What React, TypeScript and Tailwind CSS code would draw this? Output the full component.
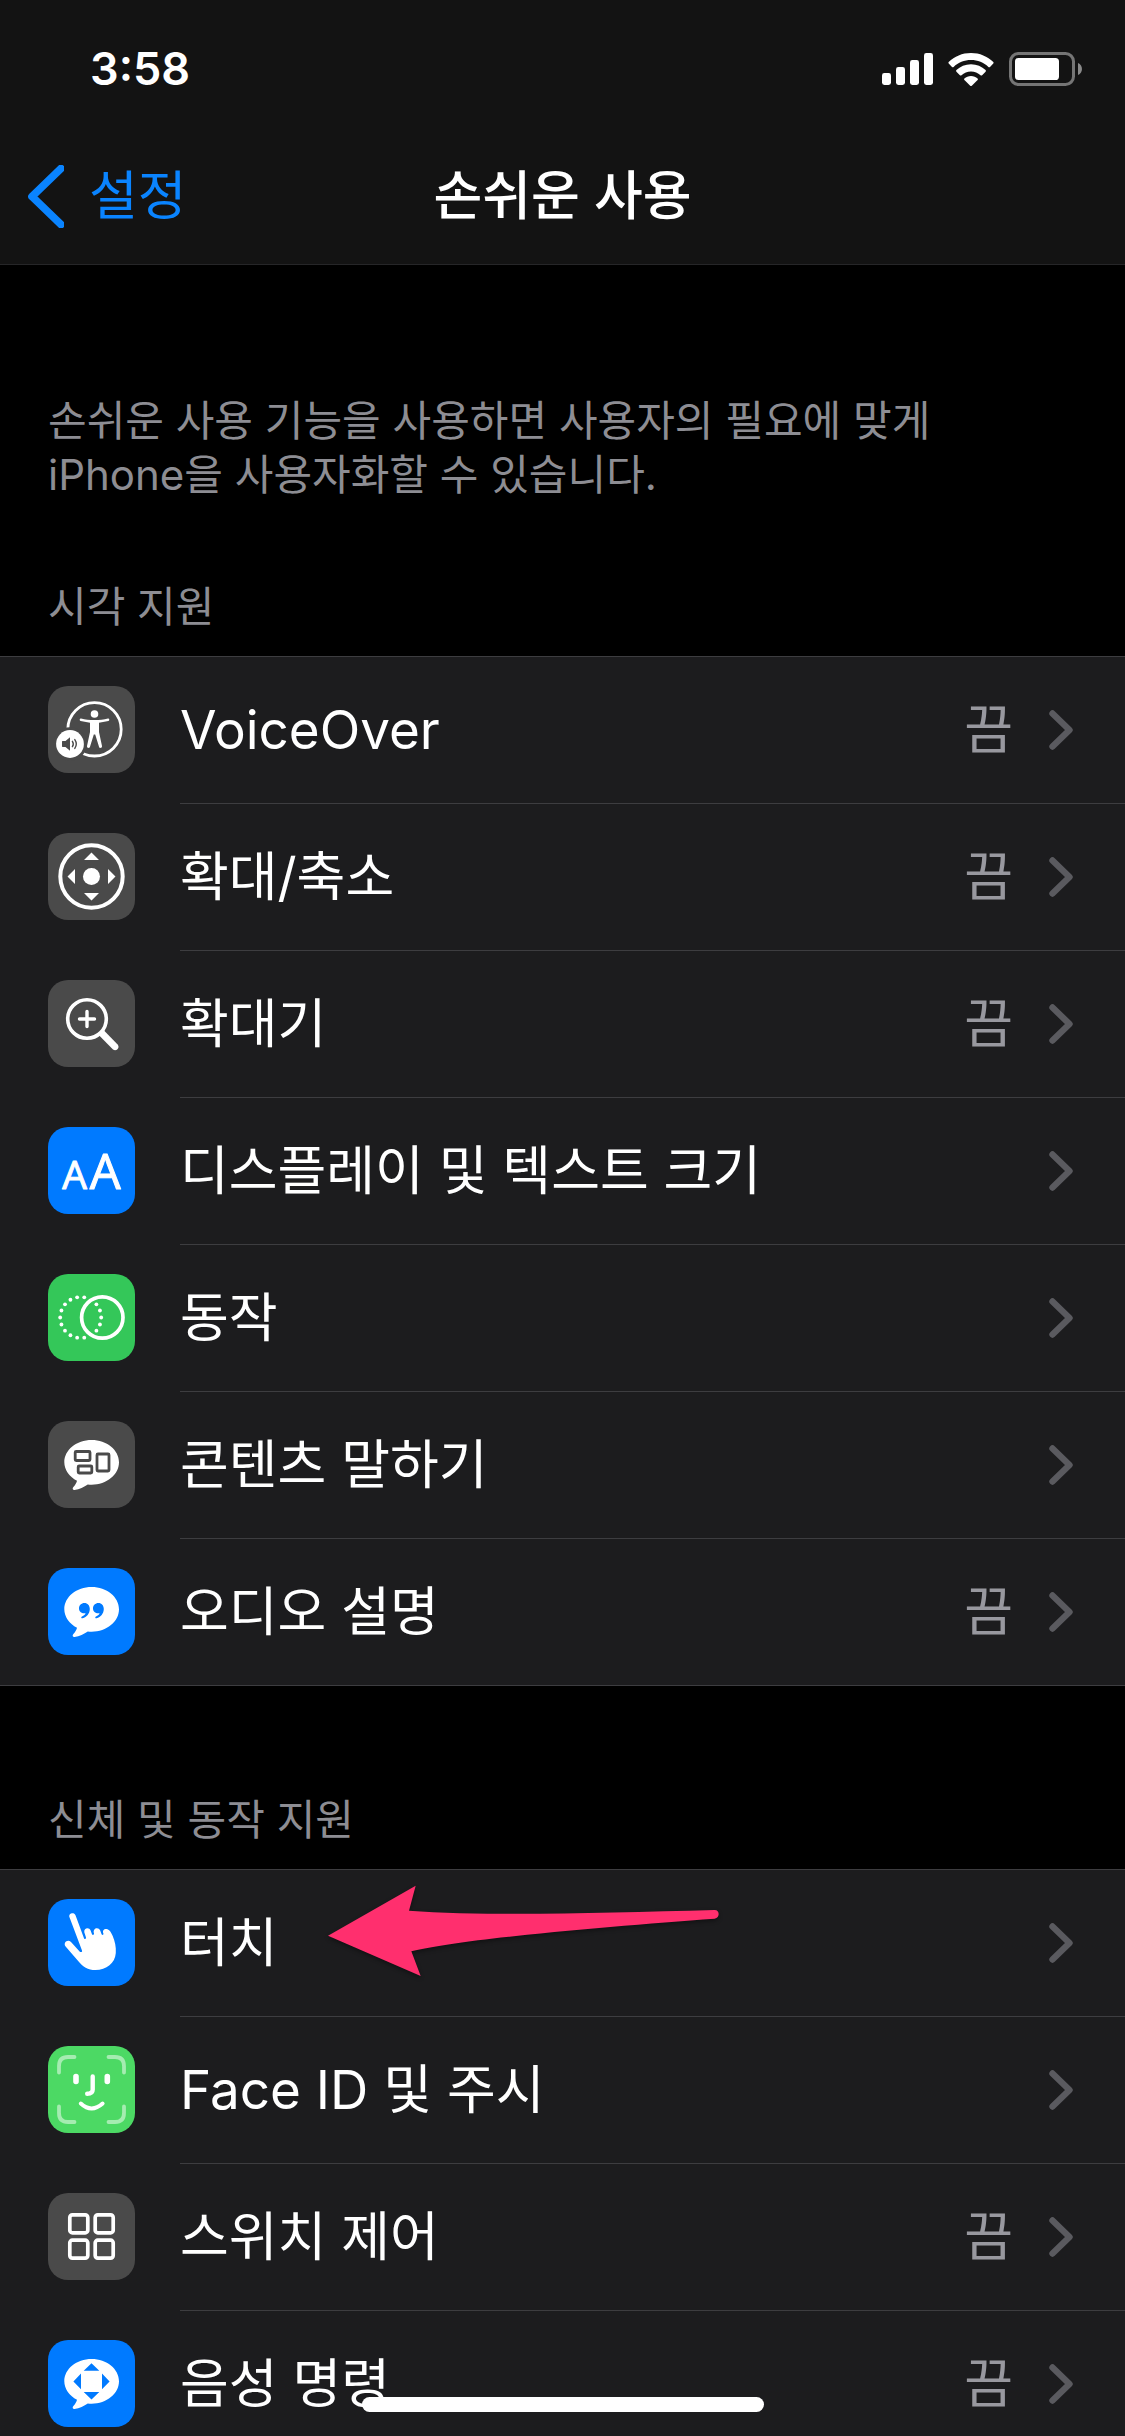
import type { ReactNode } from 'react';

interface SettingItem {
  id: string;
  label: string;
  iconBg: string;
  icon: ReactNode;
  value?: string;
  highlighted?: boolean;
}

interface SettingSection {
  id: string;
  title: string;
  items: SettingItem[];
}

const GRAY = 'bg-[#4a4a4a]';
const BLUE = 'bg-[#007aff]';

const BUBBLE_PATH =
  'M43.6 19C58.7 19 71 29 71 41.3S58.7 63.7 43.6 63.7C42.3 63.7 41 63.6 39.8 63.5C36 65.8 31.5 68.6 26.6 69C24.4 69.1 24.2 67.3 25.4 66C27.3 64 28.6 61.8 29 59.8C21.5 55.8 16.3 49.1 16.3 41.3C16.3 29 28.5 19 43.6 19Z';

const VoiceOverIcon = () => (
  <>
    <circle cx="46.5" cy="43.3" r="26.7" fill="none" stroke="#fff" strokeWidth="2.8" />
    <circle cx="46.5" cy="28" r="3.8" fill="#fff" />
    <path
      d="M33 32.6C41 34.6 52 34.6 60 32.6C61.5 32.4 61.8 34.6 60.4 35L51 36.8V46L54 60C54.3 62.3 51.6 62.6 51 60.8L47.2 48.4H45.8L42 60.8C41.4 62.6 38.7 62.3 39 60L42 46V36.8L32.6 35C31.2 34.6 31.5 32.4 33 32.6Z"
      fill="#fff"
    />
    <circle cx="22" cy="58" r="16.8" fill="#4a4a4a" />
    <circle cx="22" cy="58" r="13.9" fill="#fff" />
    <path d="M14.5 55H17.5L22 51.3V64.7L17.5 61H14.5Q14 61 14 60V56Q14 55 14.5 55Z" fill="#4a4a4a" />
    <path d="M24.4 55.3Q26.2 58 24.4 60.7M26.8 53.6Q29.8 58 26.8 62.4" fill="none" stroke="#4a4a4a" strokeWidth="1.4" strokeLinecap="round" />
  </>
);

const ZoomIcon = () => (
  <>
    <circle cx="43.5" cy="43.5" r="31.2" fill="none" stroke="#fff" strokeWidth="4" />
    <circle cx="43.5" cy="43.5" r="8.5" fill="#fff" />
    <path d="M43.5 19.5L51 27H36ZM43.5 67.5L51 60H36ZM19.5 43.5L27 36V51ZM67.5 43.5L60 36V51Z" fill="#fff" />
  </>
);

const MagnifierIcon = () => (
  <>
    <circle cx="39" cy="39" r="19.3" fill="none" stroke="#fff" strokeWidth="3.6" />
    <path d="M39 31.5V46.5M31.5 39H46.5" stroke="#fff" strokeWidth="3.4" strokeLinecap="round" />
    <path d="M56 50.6L69.6 64.4C72.3 67.6 68.4 71.9 65 69.4L51.2 55.4L51.6 53.4L54 51.2Z" fill="#fff" />
  </>
);

const TextSizeIcon = () => (
  <g
    fill="#fff"
    stroke="#fff"
    strokeWidth="1"
    strokeLinejoin="round"
    fontFamily="Open Sans, sans-serif"
    textAnchor="middle"
  >
    <text x="26.5" y="61.5" fontSize="39">A</text>
    <text x="57.3" y="61.5" fontSize="49">A</text>
  </g>
);

// the dots at 60° and 300° are hidden behind the solid ring
const motionDots = Array.from({ length: 18 }, (_, i) => i * 20).filter((a) => a !== 60 && a !== 300);

const MotionIcon = () => (
  <>
    <circle cx="54.3" cy="43.5" r="20.7" fill="none" stroke="#fff" strokeWidth="3.7" />
    {motionDots.map((angle) => (
      <circle
        key={angle}
        cx={32.7 + 20.5 * Math.cos((angle * Math.PI) / 180)}
        cy={43.5 + 20.5 * Math.sin((angle * Math.PI) / 180)}
        r="1.9"
        fill="#fff"
      />
    ))}
  </>
);

const SpokenContentIcon = () => (
  <>
    <path d={BUBBLE_PATH} fill="#fff" />
    <g fill="none" stroke="#4a4a4a" strokeWidth="2.8">
      <rect x="27.2" y="30.5" width="14.8" height="9" rx="1" />
      <rect x="30.2" y="45" width="13.6" height="7" rx="1" />
      <rect x="49" y="33" width="12" height="17" rx="1" />
    </g>
  </>
);

const AudioDescriptionIcon = () => (
  <>
    <path d={BUBBLE_PATH} fill="#fff" />
    <path
      d="M36.4 35C39.6 35 41.8 37.6 41.8 41C41.8 45.4 38.7 49.3 34.6 50.3C33.2 50.5 32.7 48.9 34 48.4C35.9 47.6 37.2 46.5 37.6 45.2C34 46 31 43.6 31 40.4C31 37.4 33.4 35 36.4 35ZM50.4 35C53.6 35 55.8 37.6 55.8 41C55.8 45.4 52.7 49.3 48.6 50.3C47.2 50.5 46.7 48.9 48 48.4C49.9 47.6 51.2 46.5 51.6 45.2C48 46 45 43.6 45 40.4C45 37.4 47.4 35 50.4 35Z"
      fill="#007aff"
    />
  </>
);

const TouchIcon = () => (
  <path
    d="M21.4 18C20.3 14.2 26.2 12.8 27.6 16.4L36 39.2C36.5 40.6 38.4 40.2 38 38.6L36.3 33.2C35.6 28.8 41.3 27.8 42.6 31.6L44 35.2C44.5 36.5 46.2 36 46 34.6C44.2 29.4 50.4 27.4 52.2 31.6L53.6 35.2C54.2 36.5 55.8 36 55.4 34.6C54 31 56.6 29.3 59.5 30.2C62 31 63.3 33.8 64.6 36.8C67 42.4 68.2 48.2 67.8 54C67.2 64 58.4 71 47.4 71C40 71 34.6 67.6 30.6 62.4L17.6 47.6C14.8 43.8 19.6 39.8 23 43L31.6 52.4C32.8 53.6 34.6 53 34 51.4Z"
    fill="#fff"
  />
);

const FaceIdIcon = () => (
  <g fill="none" strokeLinecap="round">
    <path
      d="M11 26.5V20Q11 11 20 11H26.5M60.5 11H67Q76 11 76 20V26.5M76 60.5V67Q76 76 67 76H60.5M26.5 76H20Q11 76 11 67V60.5"
      stroke="#a5ecb1"
      strokeWidth="3.8"
    />
    <path d="M28 30.5V35.5M59.3 30.5V35.5" stroke="#fff" strokeWidth="5.6" />
    <path d="M44.7 30.5V43.5Q44.7 47.8 39.2 47.8" stroke="#fff" strokeWidth="4.4" />
    <path d="M32.8 57.6Q43.6 67.4 54.6 57.6" stroke="#fff" strokeWidth="4" />
  </g>
);

const SwitchControlIcon = () => (
  <g fill="none" stroke="#fff" strokeWidth="3.7">
    <rect x="21.8" y="21.8" width="18" height="18" rx="2.6" />
    <rect x="47.2" y="21.8" width="18" height="18" rx="2.6" />
    <rect x="21.8" y="47.2" width="18" height="18" rx="2.6" />
    <rect x="47.2" y="47.2" width="18" height="18" rx="2.6" />
  </g>
);

const VoiceControlIcon = () => (
  <>
    <path d={BUBBLE_PATH} fill="#fff" />
    <path d="M43.5 23.2L51.3 30.8H35.7ZM43.5 59.6L51.3 52H35.7ZM25.4 41.4L33 33.6V49.2ZM61.6 41.4L54 33.6V49.2Z" fill="#007aff" />
  </>
);

const sections: SettingSection[] = [
  {
    id: 'vision',
    title: '시각 지원',
    items: [
      { id: 'voiceover', label: 'VoiceOver', iconBg: GRAY, icon: <VoiceOverIcon />, value: '끔' },
      { id: 'zoom', label: '확대/축소', iconBg: GRAY, icon: <ZoomIcon />, value: '끔' },
      { id: 'magnifier', label: '확대기', iconBg: GRAY, icon: <MagnifierIcon />, value: '끔' },
      { id: 'display', label: '디스플레이 및 텍스트 크기', iconBg: BLUE, icon: <TextSizeIcon /> },
      { id: 'motion', label: '동작', iconBg: 'bg-[#34c759]', icon: <MotionIcon /> },
      { id: 'spoken', label: '콘텐츠 말하기', iconBg: GRAY, icon: <SpokenContentIcon /> },
      { id: 'audio', label: '오디오 설명', iconBg: BLUE, icon: <AudioDescriptionIcon />, value: '끔' },
    ],
  },
  {
    id: 'motor',
    title: '신체 및 동작 지원',
    items: [
      { id: 'touch', label: '터치', iconBg: BLUE, icon: <TouchIcon />, highlighted: true },
      { id: 'faceid', label: 'Face ID 및 주시', iconBg: 'bg-[#4cd964]', icon: <FaceIdIcon /> },
      { id: 'switch', label: '스위치 제어', iconBg: GRAY, icon: <SwitchControlIcon />, value: '끔' },
      { id: 'voice', label: '음성 명령', iconBg: BLUE, icon: <VoiceControlIcon />, value: '끔' },
    ],
  },
];

function StatusBar() {
  return (
    <div className="flex h-[132px] items-center justify-between pr-[43px] pl-[90px] pt-1.5">
      <span className="text-[45px] leading-[54px] font-semibold">3:58</span>
      <div className="flex items-center gap-[15px]">
        <svg className="h-8 w-[51px]" viewBox="0 0 51 32" fill="#fff" aria-hidden="true">
          <rect x="0" y="20" width="9" height="12" rx="2.4" />
          <rect x="14" y="14" width="9" height="18" rx="2.4" />
          <rect x="28" y="7" width="9" height="25" rx="2.4" />
          <rect x="42" y="0" width="9" height="32" rx="2.4" />
        </svg>
        <svg className="h-[33px] w-[46px]" viewBox="0 0 46 33" fill="#fff" aria-hidden="true">
          <path d="M23 0C31.8 0 39.5 3.4 45.3 8.9Q46 9.7 45.3 10.5L42 13.9Q41.2 14.6 40.4 13.9C35.8 9.6 29.7 7 23 7S10.2 9.6 5.6 13.9Q4.8 14.6 4 13.9L.7 10.5Q0 9.7.7 8.9C6.5 3.4 14.2 0 23 0Z" />
          <path d="M23 11.3C28.7 11.3 33.8 13.5 37.6 17.1Q38.3 17.9 37.6 18.7L34.1 22.2Q33.3 22.9 32.5 22.2C30 19.9 26.7 18.4 23 18.4S16 19.9 13.5 22.2Q12.7 22.9 11.9 22.2L8.4 18.7Q7.7 17.9 8.4 17.1C12.2 13.5 17.3 11.3 23 11.3Z" />
          <path d="M23 22.9C25.5 22.9 27.9 23.9 29.6 25.5Q30.3 26.3 29.6 27L23.8 32.7Q23 33.3 22.2 32.7L16.4 27Q15.7 26.3 16.4 25.5C18.1 23.9 20.5 22.9 23 22.9Z" />
        </svg>
        <svg className="h-[34px] w-[73px]" viewBox="0 0 73 34" aria-hidden="true">
          <rect x="1.5" y="1.5" width="63" height="31" rx="8" fill="none" stroke="#757575" strokeWidth="3" />
          <rect x="6" y="6" width="44" height="22" rx="3.6" fill="#fff" />
          <path d="M69 11C74.3 13 74.3 21 69 23Z" fill="#8a8a8a" />
        </svg>
      </div>
    </div>
  );
}

function NavBar() {
  return (
    <nav className="grid h-[132px] grid-cols-[1fr_auto_1fr] items-center pb-1">
      <a href="#settings" className="flex items-center gap-[25px] pl-7 text-[53px] leading-[72px] text-[#0a84ff]">
        <svg className="h-[63px] w-9" viewBox="0 0 36 63" fill="none" aria-hidden="true">
          <path d="M33 3.5L4 31.5L33 59.5" stroke="currentColor" strokeWidth="7.6" strokeLinecap="round" strokeLinejoin="round" />
        </svg>
        설정
      </a>
      <h1 className="text-[53px] leading-[72px] font-medium">손쉬운 사용</h1>
    </nav>
  );
}

function SettingRow({ item }: { item: SettingItem }) {
  return (
    <li className="group relative">
      <a href={`#${item.id}`} className="flex h-[147px] items-center pl-12">
        <svg className={`h-[87px] w-[87px] shrink-0 rounded-[20px] ${item.iconBg}`} viewBox="0 0 87 87" aria-hidden="true">
          {item.icon}
        </svg>
        <div className="ml-[45px] flex h-full flex-1 items-center border-t border-[#3d3d40] pr-[52px] group-first:border-transparent">
          <span className="flex-1 text-[53px] leading-[72px]">{item.label}</span>
          {item.value && <span className="text-[53px] leading-[72px] text-[#98989f]">{item.value}</span>}
          <svg className="ml-9 h-10 w-6" viewBox="0 0 24 40" fill="none" aria-hidden="true">
            <path d="M3.5 3.5L20.5 20L3.5 36.5" stroke="#5a5a5f" strokeWidth="6.4" strokeLinecap="round" strokeLinejoin="round" />
          </svg>
        </div>
      </a>
      {item.highlighted && (
        <svg
          className="pointer-events-none absolute top-0 left-80 h-[125px] w-[420px] drop-shadow-[0_2px_2px_rgba(0,0,0,0.4)]"
          viewBox="0 0 1260 375"
          aria-hidden="true"
        >
          <path d="M24 200L287 50L267 125C500 142 850 132 1184 123C1200 123 1200 147 1184 149C900 170 450 206 274 247L302 321Z" fill="#ff2f6e" />
        </svg>
      )}
    </li>
  );
}

export default function App() {
  return (
    <div className="flex h-screen flex-col overflow-hidden bg-black font-['Inter','Noto_Sans_CJK_KR',sans-serif] text-white">
      <header className="shrink-0 border-b border-[#262628] bg-[#131313]">
        <StatusBar />
        <NavBar />
      </header>

      <main className="min-h-0 flex-1 overflow-y-auto [scrollbar-width:none]">
        <p className="px-12 pt-[129px] text-[42px] leading-[54px] break-keep text-[#8d8d93]">
          손쉬운 사용 기능을 사용하면 사용자의 필요에 맞게 iPhone을 사용자화할 수 있습니다.
        </p>
        {sections.map((section) => (
          <section key={section.id} className="pt-[107px] first-of-type:pt-[78px]">
            <h2 className="px-12 pb-[22px] text-[42px] leading-[54px] text-[#8d8d93]">{section.title}</h2>
            <ul className="relative border-b border-[#3d3d40] bg-[#1c1c1e] shadow-[inset_0_1px_0_#3d3d40]">
              {section.items.map((item) => (
                <SettingRow key={item.id} item={item} />
              ))}
            </ul>
          </section>
        ))}
      </main>

      <div className="fixed bottom-6 left-1/2 h-[15px] w-[402px] -translate-x-1/2 rounded-full bg-white" />
    </div>
  );
}
